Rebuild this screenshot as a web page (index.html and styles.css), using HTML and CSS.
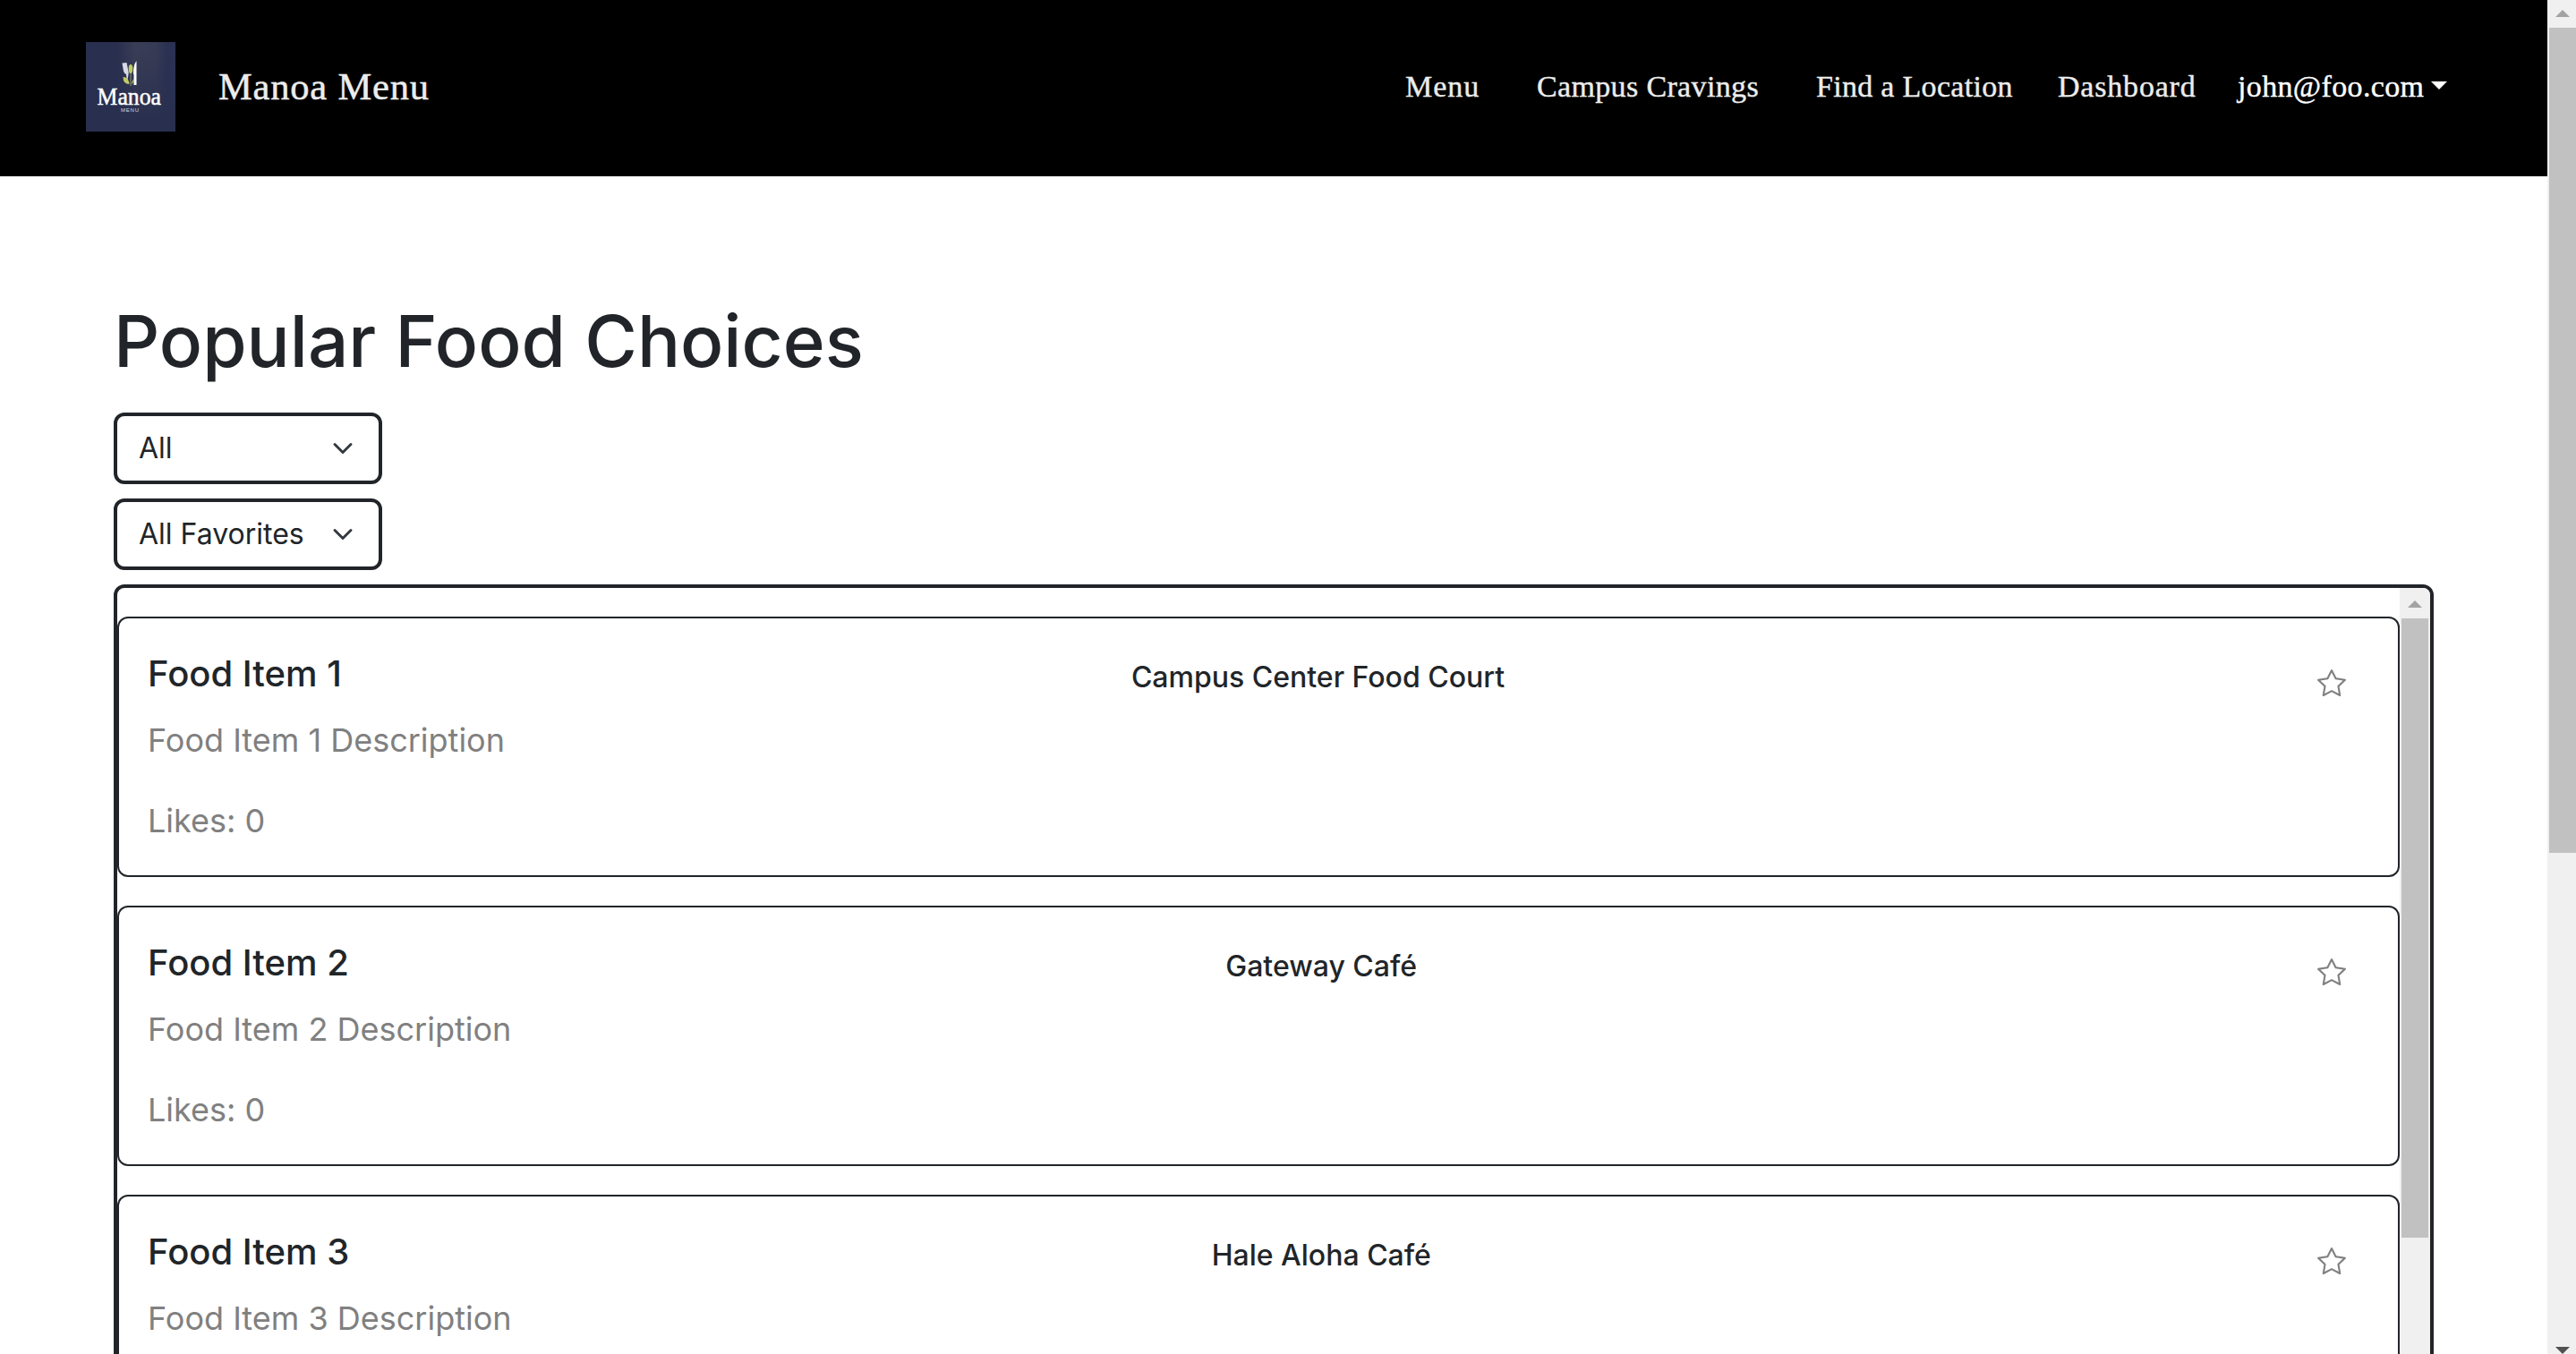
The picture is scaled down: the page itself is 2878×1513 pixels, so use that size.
FILE: index.html
```html
<!DOCTYPE html>
<html lang="en">
<head>
<meta charset="utf-8">
<title>Manoa Menu</title>
<link rel="stylesheet" href="styles.css">
</head>
<body>
<svg class="defs" aria-hidden="true">
  <symbol id="star" viewBox="0 0 16 16"><path d="M2.866 14.85c-.078.444.36.791.746.593l4.39-2.256 4.389 2.256c.386.198.824-.149.746-.592l-.83-4.73 3.522-3.356c.33-.314.16-.888-.282-.95l-4.898-.696L8.465.792a.513.513 0 0 0-.927 0L5.354 5.12l-4.898.696c-.441.062-.612.636-.283.95l3.523 3.356-.83 4.73zm4.905-2.767-3.686 1.894.694-3.957a.56.56 0 0 0-.163-.505L1.71 6.745l4.052-.576a.53.53 0 0 0 .393-.288L8 2.223l1.847 3.658a.53.53 0 0 0 .393.288l4.052.575-2.906 2.77a.56.56 0 0 0-.163.506l.694 3.957-3.686-1.894a.5.5 0 0 0-.461 0z"/></symbol>
  <symbol id="chevron" viewBox="0 0 16 16"><path d="m2 5 6 6 6-6" fill="none" stroke="#343a40" stroke-width="2" stroke-linecap="round" stroke-linejoin="round"/></symbol>
</svg>
<div class="page">
  <header class="navbar">
    <svg class="logo" viewBox="0 0 100 100">
      <defs><linearGradient id="sheen"><stop offset=".35" stop-color="#292f4f"/><stop offset=".55" stop-color="#393d56"/><stop offset=".78" stop-color="#363b55"/><stop offset=".9" stop-color="#2b3153"/></linearGradient>
      <linearGradient id="fade" x2="0" y2="1"><stop offset=".1" stop-color="#292f4f" stop-opacity="0"/><stop offset=".9" stop-color="#292f4f"/></linearGradient></defs>
      <rect width="100" height="100" fill="url(#sheen)"/><rect width="100" height="100" fill="url(#fade)"/>
      <path d="M40.500 23.500l1.500 9q1 3 3 3.500l1 10 1.500-10q.5-1 0-3l-2-10z" fill="#d9dae6"/>
      <path d="M56.500 21q-4 5-3.500 15h.5v12h3z" fill="#fff"/>
      <path d="M50 34v15" stroke="#8d9279" stroke-width="1"/>
      <ellipse cx="50" cy="30" rx="2.300" ry="5" fill="#c0cc62"/>
      <path d="M41.500 39q6 0 7 8-7 0-7-8z" fill="#c0cc62"/>
      <path d="M51 47q1-5 3-6-1 5-3 6z" fill="#c0cc62"/>
      <text x="12.500" y="70" class="logo-name" textLength="71.500" lengthAdjust="spacingAndGlyphs">Manoa</text>
      <text x="39" y="77.500" class="logo-sub" textLength="20">MENU</text>
    </svg>
    <a class="brand">Manoa Menu</a>
    <nav class="links">
      <a class="link menu">Menu</a>
      <a class="link cravings">Campus Cravings</a>
      <a class="link location">Find a Location</a>
      <a class="link dashboard">Dashboard</a>
      <a class="link account">john@foo.com</a>
      <span class="caret"></span>
    </nav>
  </header>
  <main class="content">
    <h1>Popular Food Choices</h1>
    <div class="select"><span>All</span><svg><use href="#chevron"/></svg></div>
    <div class="select"><span>All Favorites</span><svg><use href="#chevron"/></svg></div>
    <section class="list">
      <div class="cards">
        <article class="card">
          <div class="info"><h2>Food Item 1</h2><p>Food Item 1 Description</p><p class="likes">Likes: 0</p></div>
          <h3>Campus Center Food Court</h3>
          <div class="fav"><svg><use href="#star"/></svg></div>
        </article>
        <article class="card">
          <div class="info"><h2>Food Item 2</h2><p>Food Item 2 Description</p><p class="likes">Likes: 0</p></div>
          <h3>Gateway Café</h3>
          <div class="fav"><svg><use href="#star"/></svg></div>
        </article>
        <article class="card">
          <div class="info"><h2>Food Item 3</h2><p>Food Item 3 Description</p></div>
          <h3>Hale Aloha Café</h3>
          <div class="fav"><svg><use href="#star"/></svg></div>
        </article>
      </div>
      <div class="bar list-bar"><i class="up"></i><div class="thumb"></div></div>
    </section>
  </main>
</div>
<div class="bar page-bar"><i class="up"></i><div class="thumb"></div><i class="down"></i></div>
</body>
</html>
```
FILE: styles.css
```css
* { box-sizing: border-box; }
body {
  margin: 0;
  height: 1513px;
  overflow: hidden;
  display: flex;
  background: #fff;
  color: #212529;
  font-family: Inter, sans-serif;
}
.defs { display: none; }
.page { flex: 1; height: 1513px; overflow: hidden; }

.navbar {
  height: 197px;
  padding: 47px 112px 50px 96px;
  display: flex;
  background: #000;
  color: #ececec;
  font-family: "Liberation Serif", serif;
}
.logo { width: 100px; height: 100px; flex: none; }
.logo-name { font: 27px "Liberation Serif", serif; fill: #fff; stroke: #fff; stroke-width: .5px; }
.logo-sub { font: 6px "Liberation Sans", sans-serif; fill: #d0d3e0; }
.brand { margin-left: 48px; font-size: 42.5px; line-height: 100px; letter-spacing: .8px; white-space: nowrap; -webkit-text-stroke: .5px; }
.links { margin-left: auto; display: flex; line-height: 100px; font-size: 34px; white-space: nowrap; -webkit-text-stroke: .4px; }
.menu { width: 147px; letter-spacing: 1px; }
.cravings { width: 312px; letter-spacing: .35px; }
.location { width: 270px; letter-spacing: .3px; }
.dashboard { width: 201px; letter-spacing: .8px; }
.account { width: 216px; letter-spacing: .35px; color: #fff; }
.caret { margin-top: 44px; width: 18px; height: 9px; background: #fff; clip-path: polygon(0 0, 100% 0, 50% 100%); }

.content { padding: 136px 127px 0; }
h1, h2, h3, p { margin: 0; white-space: nowrap; }
h1 { font-size: 80px; font-weight: 500; line-height: 96px; margin-bottom: 32px; }
.select {
  width: 300px;
  height: 80px;
  margin-bottom: 16px;
  padding: 0 28px 0 24px;
  display: flex;
  align-items: center;
  justify-content: space-between;
  border: 4px solid #212529;
  border-radius: 12px;
  font-size: 32px;
}
.select span { padding-bottom: 2px; }
.select svg { width: 24px; height: 24px; }
.list {
  height: 1200px;
  display: flex;
  border: 4px solid #212529;
  border-radius: 12px;
  overflow: hidden;
}
.cards { flex: 1; padding-top: 32px; display: flex; flex-direction: column; gap: 32px; }
.card {
  flex: none;
  height: 291px;
  padding: 32px;
  display: flex;
  justify-content: space-between;
  border: 2px solid #212529;
  border-radius: 12px;
}
.info { padding-top: 6px; }
h2 { font-size: 40px; font-weight: 500; line-height: 48px; }
h3 { padding-top: 15px; font-size: 32px; font-weight: 500; line-height: 38px; }
p { margin-top: 23px; font-size: 36px; line-height: 54px; color: #808080; }
.likes { margin-top: 36px; }
.fav { width: 266px; padding: 24px 26px; display: flex; justify-content: flex-end; }
.fav svg { width: 32px; height: 32px; fill: #808080; }

.bar { display: flex; flex-direction: column; align-items: center; background: #f0f0f0; }
.thumb { width: 30px; background: #c1c1c1; }
.list-bar { width: 34px; }
.list-bar .thumb { height: 692px; }
.up, .down { width: 16px; height: 8px; flex: none; }
.up { background: #a3a3a3; clip-path: polygon(50% 0, 100% 100%, 0 100%); margin: 14px 0 12px; }
.down { background: #505050; clip-path: polygon(0 0, 100% 0, 50% 100%); margin-top: auto; }
.page-bar { width: 32px; height: 1513px; padding-left: 2px; }
.page-bar .thumb { height: 922px; }
.page-bar .up { margin: 11px 0 12px; }
```
